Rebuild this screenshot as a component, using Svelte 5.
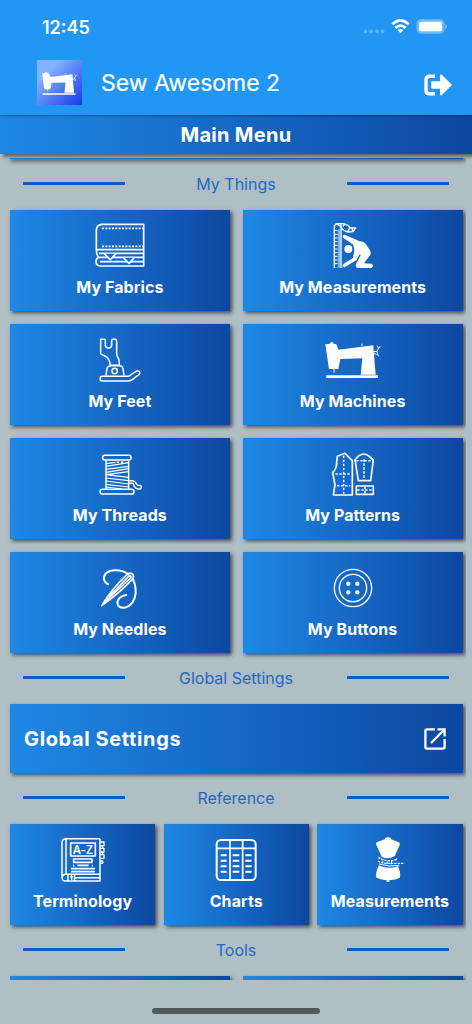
<script lang="ts">
  type MenuItem = { label: string; icon: string; viewBox: string };

  const things: MenuItem[] = [
    { label: 'My Fabrics', icon: 'fabrics', viewBox: '275 60 168 144' },
    { label: 'My Measurements', icon: 'body', viewBox: '266 60 168 144' },
    { label: 'My Feet', icon: 'foot', viewBox: '275 402 168 144' },
    { label: 'My Machines', icon: 'machine', viewBox: '266 402 168 144' },
    { label: 'My Threads', icon: 'thread', viewBox: '275 54 168 144' },
    { label: 'My Patterns', icon: 'pattern', viewBox: '266 54 168 144' },
    { label: 'My Needles', icon: 'needle', viewBox: '275 397 168 144' },
    { label: 'My Buttons', icon: 'button', viewBox: '266 397 168 144' },
  ];

  const reference: MenuItem[] = [
    { label: 'Terminology', icon: 'book', viewBox: '163 72 168 144' },
    { label: 'Charts', icon: 'chart', viewBox: '-84 72 168 144' },
    { label: 'Measurements', icon: 'mannequin', viewBox: '379 72 168 144' },
  ];
</script>

{#snippet machine()}
  <path fill="#fff" stroke="none" d="M267 433 L281 431 L283 427 L290 427 L292 431 L300 433 L307 449 L411 436 L412 452 L418 524 L373 524 L378 475 L312 477 L306 507 L278 507 Z" />
  <path stroke-width="3" d="M293 507V518M377 431V438M412 455L422 454M423 437L426 445L422 455L426 469M426 444L433 440M413 460L421 464" />
  <path stroke-width="8" d="M270 530H425" />
{/snippet}

{#snippet icon(name: string)}
  {#if name === 'fabrics'}
    <path stroke-width="5" d="M430 73H303Q288 76 288 92V149H430ZM430 149V198H299Q287 197 287 184Q287 175 296 172Q288 166 288 149M296 160H430M296 172H430M299 185H430" />
    <path stroke-width="5" stroke-dasharray="6 4" d="M305 85H428M305 139H428" />
    <path fill="#1769c7" stroke-width="5" d="M312 161L330 179L347 161M369 173L386 190L402 173" />
  {:else if name === 'body'}
    <path stroke-width="4" d="M294 82V205H314V82Q322 94 337 96L350 95L358 84H342Q332 70 315 71H302Q294 73 294 82ZM314 82V72M302 72L314 80M324 73L320 80M335 94L340 84M348 95V86" />
    <path stroke-width="3" d="M295 92H304M295 103H304M295 114H304M295 125H304M295 136H304M295 147H304M295 158H304M295 169H304M295 180H304M295 191H304M308 88V201" />
    <circle cx="336" cy="147" r="12" fill="#fff" stroke="none" />
    <path fill="#fff" stroke="none" d="M325 104Q317 105 320 113L351 134L354 151L350 174L321 192Q315 202 325 202L360 181L370 163L373 166L359 192Q356 204 365 204H406Q415 196 406 191L383 190L402 164Q405 157 401 151L388 131Q381 124 370 124Z" />
  {:else if name === 'foot'}
    <path stroke-width="4.5" d="M301 418H312Q315 418 315 422V434Q315 444 325 444Q334 444 334 434V422Q334 418 338 418H345Q349 418 349 423V460Q349 468 355 477Q358 486 357 496H329Q330 477 314 468Q301 462 301 461ZM317 527L320 505Q323 497 332 497H359Q366 497 368 506L371 527" />
    <circle cx="343" cy="513" r="8" stroke-width="4.5" />
    <path stroke-width="4.5" d="M306 529H380Q387 529 392 524L407 514Q416 511 418 517Q420 522 414 525L397 538Q391 543 382 543H306Q299 542 299 536Q299 530 306 529Z" />
  {:else if name === 'machine'}
    {@render machine()}
  {:else if name === 'thread'}
    <rect x="307" y="76" width="85" height="14" rx="6" stroke-width="4.5" />
    <rect x="299" y="178" width="102" height="14" rx="7" stroke-width="4.5" />
    <path stroke-width="4.5" d="M317 91V177M385 91V177" />
    <path stroke-width="3.5" d="M317 101L345 97M317 109L385 98M317 118L385 109M317 127L385 116M317 134L385 125M317 134L385 142M317 144L385 152M317 153L385 162M317 163L385 171M317 171L364 177" />
    <path stroke-width="4.5" d="M349 97H356M362 97H369M386 152H398Q406 154 409 163Q412 167 419 166Q426 169 421 176Q410 179 403 171L398 160H386" />
  {:else if name === 'pattern'}
    <path stroke-width="5" d="M326 70L303 79L301 97Q302 114 289 128L296 164L291 195H348V92Z" />
    <path stroke-width="5" d="M356 89L368 77Q382 68 396 77L411 90L403 152H366ZM360 168H411V193H360Z" />
    <path stroke-width="4.5" stroke-dasharray="7 5" d="M322 77V191M297 132H343M302 167H342M360 92H409M383 88V149M363 180H409M386 171V191" />
  {:else if name === 'needle'}
    <path stroke-width="5" d="M304 528Q335 476 381 434Q386 428 395 432Q402 437 398 447Q359 489 304 528ZM313 517L391 445Q394 437 386 439L326 501" />
    <path stroke-width="6" d="M326 465Q309 458 311 442Q316 423 343 422Q369 421 386 436M397 447Q407 465 406 491Q402 525 374 534Q353 537 351 519Q352 500 380 495" />
  {:else if name === 'button'}
    <circle cx="350" cy="475" r="56" stroke-width="4" />
    <circle cx="350" cy="475" r="41" stroke-width="4" />
    <g fill="#fff" stroke="none">
      <circle cx="336" cy="462" r="6.5" /><circle cx="363" cy="462" r="6.5" />
      <circle cx="336" cy="488" r="6.5" /><circle cx="363" cy="488" r="6.5" />
    </g>
  {:else if name === 'book'}
    <path stroke-width="4.5" d="M298 86H194Q184 88 184 98V204Q185 213 193 213H298V86M196 87V193M185 202Q185 193 194 193H297M202 193V211M209 200H218M213 195V210M222 195V211M223 203H296" />
    <path stroke-width="4" d="M299 96H310V107H299M299 115H310V126H299M299 134H310V145H299M299 153H306V160H299M298 108H306V116M298 128H306V135" />
    <rect x="210" y="99" width="74" height="39" stroke-width="5" />
    <text x="247" y="131" fill="#fff" stroke="none" font-size="34" font-weight="600" text-anchor="middle">A-Z</text>
    <rect x="219" y="147" width="55" height="10" stroke-width="5" />
    <path stroke-width="5" d="M230 166H264M217 167H221M273 167H277M211 176H283M211 185H283" />
  {:else if name === 'chart'}
    <rect x="-58" y="90" width="117" height="120" rx="13" stroke-width="6" />
    <path stroke-width="5" d="M-58 115H59M-18 90V210M20 90V210" />
    <path stroke-width="6" d="M-46 136H-28M-46 152H-28M-46 169H-28M-46 185H-28M-10 136H10M-10 152H10M-10 169H10M-10 185H10M28 136H47M28 152H47M28 169H47M28 185H47" />
  {:else if name === 'mannequin'}
    <path fill="#fff" stroke="none" d="M448 88V84Q457 79 466 84V88L488 96Q494 98 492 105L478 137Q458 151 438 140L422 105Q419 98 427 95ZM430 166Q459 180 487 168Q496 191 493 203Q480 210 461 211V216H453V211Q432 209 421 202Q419 188 430 166Z" />
    <path stroke-width="4" stroke-dasharray="7 3" d="M428 142Q452 158 482 149M427 153Q438 160 454 160H503" />
    <path stroke-width="3" d="M430 162L460 168L491 166M442 153L440 160M455 155L453 163M468 153L466 163M480 149L485 146" />
  {/if}
{/snippet}

{#snippet heading(text: string)}
  <div class="heading">
    <span class="rule"></span>
    <h2>{text}</h2>
    <span class="rule"></span>
  </div>
{/snippet}

{#snippet card(item: MenuItem)}
  <button class="card">
    <svg class="icon" viewBox={item.viewBox} aria-hidden="true">{@render icon(item.icon)}</svg>
    <span>{item.label}</span>
  </button>
{/snippet}

<div class="app">
  <header>
    <div class="status">
      <span class="time">12:45</span>
      <svg width="84" height="20" viewBox="0 0 84 20">
        <g fill="#fff" opacity=".3">
          <circle cx="1.4" cy="14.4" r="1.9" /><circle cx="7.2" cy="14.4" r="1.9" />
          <circle cx="13" cy="14.4" r="1.9" /><circle cx="18.6" cy="14.4" r="1.9" />
        </g>
        <path fill="none" stroke="#fff" stroke-width="2.7" d="M28.3 7.3Q36.5 -.6 44.7 7.3M31.4 10.9Q36.5 6.2 41.6 10.9" />
        <path fill="#fff" d="M33.6 13.1Q36.5 10.9 39.4 13.1L36.5 16.2Z" />
        <rect x="52.5" y="2.2" width="28" height="14.6" rx="4.5" fill="#fff" opacity=".35" />
        <rect x="55" y="4.8" width="23" height="9.4" rx="2" fill="#fff" />
        <path fill="#fff" opacity=".45" d="M81.3 7.2Q83 8 83 9.5T81.3 11.8Z" />
      </svg>
    </div>
    <div class="toolbar">
      <svg class="logo" viewBox="243 369 213 213" aria-hidden="true">{@render machine()}</svg>
      <h1>Sew Awesome 2</h1>
      <svg class="logout" width="28" height="22" viewBox="0 0 28 22">
        <path fill="none" stroke="#fff" stroke-width="3.4" stroke-linejoin="round" d="M11 2.2H5.5Q2 2.2 2 5.7V16.3Q2 19.8 5.5 19.8H11" />
        <path fill="#fff" d="M8.2 7.3H16V1.6Q16.3 .2 17.6 .8L27.4 10.2Q28 11 27.4 11.8L17.6 21.2Q16.3 21.8 16 20.4V14.7H8.2Q7.2 14.7 7.2 13.7V8.3Q7.2 7.3 8.2 7.3Z" />
      </svg>
    </div>
  </header>

  <div class="menu-bar">Main Menu</div>

  <main>
    <div class="card edge-top"></div>

    {@render heading('My Things')}
    <div class="grid two">
      {#each things as item}
        {@render card(item)}
      {/each}
    </div>

    {@render heading('Global Settings')}
    <button class="card wide">
      <span>Global Settings</span>
      <svg width="22" height="22" viewBox="0 0 22 22" fill="none" stroke="#fff" stroke-width="2.3">
        <path d="M11 1.4H3Q1.4 1.4 1.4 3V19Q1.4 20.6 3 20.6H19Q20.6 20.6 20.6 19V11M13.5 1.4H20.6V8.5M20.2 1.8L7 15" />
      </svg>
    </button>

    {@render heading('Reference')}
    <div class="grid three">
      {#each reference as item}
        {@render card(item)}
      {/each}
    </div>

    {@render heading('Tools')}
    <div class="grid two">
      <div class="card edge-bottom"></div>
      <div class="card edge-bottom"></div>
    </div>
  </main>

  <div class="home"></div>
</div>

<style>
  :global(body) {
    background: #b0bec5;
  }

  .app {
    width: 472px;
    height: 1024px;
    overflow: hidden;
    background: #b0bec5;
    color: #fff;
    font-family: Inter, "Liberation Sans", sans-serif;
    display: flex;
    flex-direction: column;
  }

  h1, h2 { margin: 0; font-weight: 400; }

  header {
    height: 115px;
    flex: none;
    background: #2196f3;
    box-shadow: 0 1px 2px rgba(0, 0, 0, 0.35);
    position: relative;
    z-index: 2;
  }

  .status {
    height: 54px;
    padding: 0 24px 0 42px;
    display: flex;
    align-items: center;
    justify-content: space-between;
    box-sizing: border-box;
  }

  .time {
    font-size: 18px;
    font-weight: 600;
  }

  .toolbar {
    display: flex;
    align-items: center;
    padding: 6px 20px 0 37px;
  }

  .logo {
    width: 45px;
    height: 45px;
    margin-right: 19px;
    background: linear-gradient(135deg, #82b1ff 25%, #1238e8);
  }

  h1 {
    flex: 1;
    font-size: 23px;
    letter-spacing: 0;
    -webkit-text-stroke: 0.2px #fff;
  }

  .logout { margin-top: 4px; }

  .menu-bar {
    flex: none;
    height: 39px;
    line-height: 40px;
    text-align: center;
    font-size: 20px;
    font-weight: 700;
    letter-spacing: 0.3px;
    background: linear-gradient(90deg, #1e88e5, #0d47a1);
    box-shadow: 3px 3px 3px rgba(70, 70, 70, 0.7);
    position: relative;
    z-index: 1;
  }

  /* Scroll viewport, cards are cut off at both ends */
  main {
    width: 466px;
    height: 822px;
    margin-top: 4px;
    padding: 0 3.5px 0 10px;
    box-sizing: border-box;
    overflow: hidden;
    flex: none;
  }

  .card {
    display: flex;
    flex-direction: column;
    align-items: center;
    width: 100%;
    height: 101px;
    padding: 10px 0 0;
    border: 0;
    box-sizing: border-box;
    color: #fff;
    font: 700 16px/20px Inter, "Liberation Sans", sans-serif;
    letter-spacing: 0.08px;
    background: linear-gradient(90deg, #1e88e5, #0d47a1);
    box-shadow: 2px 2px 4px rgba(50, 50, 50, 0.85);
    white-space: nowrap;
  }

  .card span { margin-top: 9px; }

  .card.edge-top {
    height: 1px;
    padding: 0;
    box-shadow: 2px 1px 4px 1px rgba(50, 50, 50, 0.95);
  }

  .card.edge-bottom { padding: 0; }

  .icon {
    width: 56px;
    height: 48px;
    flex: none;
  }

  .icon, .logo {
    fill: none;
    stroke: #fff;
    stroke-linejoin: round;
  }

  .heading {
    height: 51px;
    padding: 0 13.5px 2px 13px;
    box-sizing: border-box;
    display: flex;
    align-items: center;
    justify-content: space-between;
  }

  .heading h2 {
    color: #1f6ac2;
    font-size: 16px;
    letter-spacing: 0;
  }

  .rule {
    width: 102px;
    height: 3px;
    background: #0f60c4;
  }

  .grid {
    display: grid;
    row-gap: 13.1px;
  }

  .two {
    grid-template-columns: 1fr 1fr;
    column-gap: 13px;
  }

  .three {
    grid-template-columns: 1fr 1fr 1fr;
    column-gap: 8.5px;
  }

  .card.wide {
    flex-direction: row;
    justify-content: space-between;
    height: 69px;
    padding: 0 17px 0 14px;
    font-size: 20px;
    letter-spacing: 0.62px;
  }

  .wide span { margin: 0; }

  .home {
    width: 168px;
    height: 6px;
    margin: 28px auto 0;
    border-radius: 3px;
    background: #51585c;
  }
</style>
